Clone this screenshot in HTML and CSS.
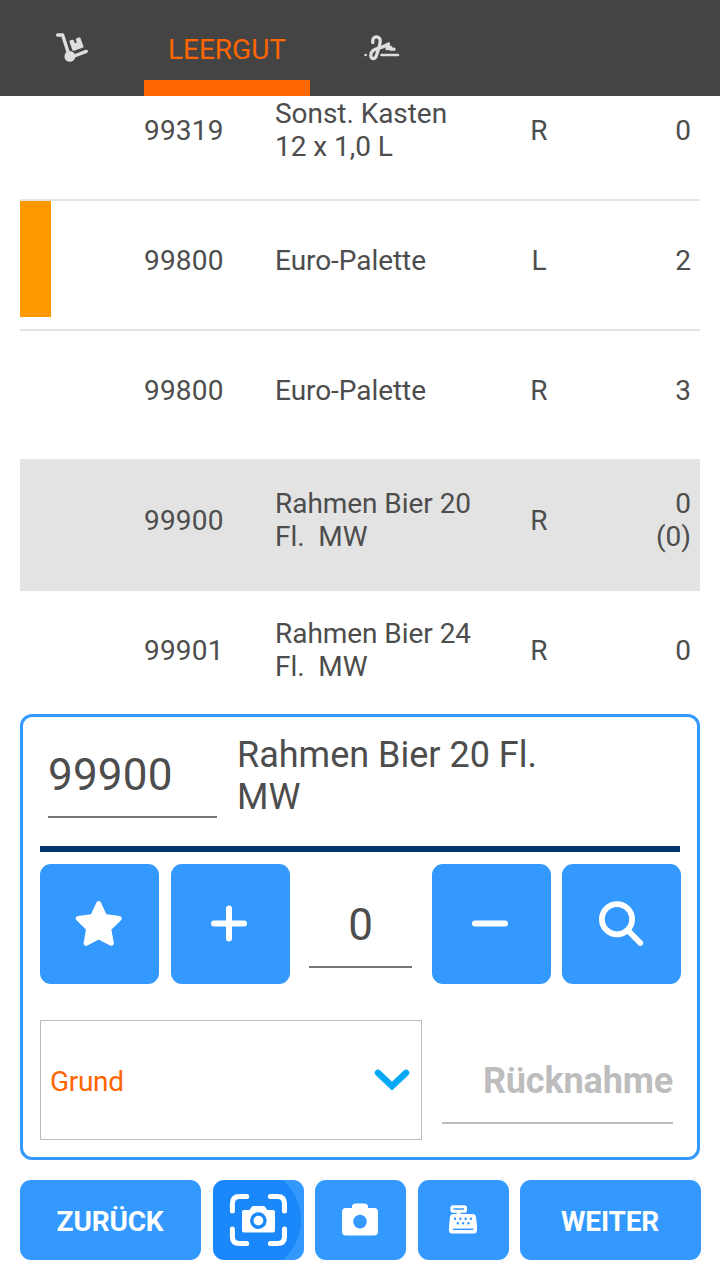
FILE: index.html
```html
<!DOCTYPE html>
<html lang="de">
  <head>
    <meta charset="UTF-8" />
    <meta name="viewport" content="width=device-width, initial-scale=1.0" />
    <title>Leergut</title>
    <link rel="stylesheet" href="styles.css">
  </head>
  <body>
    <div class="app">
      <nav class="tabs">
        <div class="tab">
          <svg width="36" height="34" viewBox="54 31 36 34" fill="none" stroke="#dedede" stroke-width="3.4" stroke-linecap="round" stroke-linejoin="round">
            <path d="M57.6 35H62.6L69 55M73 56.5L86.3 51.4" />
            <circle cx="69.8" cy="56.4" r="5.4" fill="#dedede" stroke="none" />
            <path d="M70.8 41.6L72.6 41L74.2 45L78.4 43.6L77.2 39.4L79.3 38.6L82.2 46.6L73.6 49.5Z" fill="#dedede" stroke-width="2.6" />
          </svg>
        </div>
        <div class="tab active">LEERGUT</div>
        <div class="tab">
          <svg width="38" height="30" viewBox="363 33 38 30" fill="none" stroke="#dedede" stroke-width="3.3" stroke-linecap="round" stroke-linejoin="round">
            <path d="M372.8 42.5V40.5C372.8 35.5 380.8 35.5 380.2 41.5C379.6 47 377.8 51 376.6 55C375.2 60 370.8 59.5 370.8 55C370.8 50 376 48.6 379.5 47.8C384 46.7 386 45 388.5 44L387 48.7L390.6 47.4V49.2H394" />
            <path d="M381.5 55H398M365.6 55h.1" stroke-width="2.6" />
          </svg>
        </div>
      </nav>

      <div class="list">
        <div class="row">
          <span class="marker"></span>
          <span class="number">99319</span>
          <span class="name">Sonst. Kasten<br>12 x 1,0 L</span>
          <span class="type">R</span>
          <span class="amount">0</span>
        </div>
        <div class="row">
          <span class="marker marked"></span>
          <span class="number">99800</span>
          <span class="name">Euro-Palette</span>
          <span class="type">L</span>
          <span class="amount">2</span>
        </div>
        <div class="row">
          <span class="marker"></span>
          <span class="number">99800</span>
          <span class="name">Euro-Palette</span>
          <span class="type">R</span>
          <span class="amount">3</span>
        </div>
        <div class="row selected">
          <span class="marker"></span>
          <span class="number">99900</span>
          <span class="name">Rahmen Bier 20<br>Fl.&nbsp; MW</span>
          <span class="type">R</span>
          <span class="amount">0<br>(0)</span>
        </div>
        <div class="row">
          <span class="marker"></span>
          <span class="number">99901</span>
          <span class="name">Rahmen Bier 24<br>Fl.&nbsp; MW</span>
          <span class="type">R</span>
          <span class="amount">0</span>
        </div>
      </div>

      <section class="panel">
        <div class="article">
          <div class="field article-number">99900</div>
          <div class="article-name">Rahmen Bier 20 Fl.<br>MW</div>
        </div>

        <div class="controls">
          <button class="btn" aria-label="Favorit">
            <svg width="48" height="48" viewBox="75 900 48 48" fill="#fff" stroke="#fff" stroke-width="5" stroke-linejoin="round">
              <path d="M98.7 903.6L104.5 916.4L119.2 918.5L108.7 928.8L111.3 943.3L98.7 936.8L86.1 943.3L88.7 928.8L78.3 918.5L92.9 916.4Z" />
            </svg>
          </button>
          <button class="btn" aria-label="Plus">
            <svg width="40" height="40" viewBox="209 904 40 40" fill="none" stroke="#fff" stroke-width="6" stroke-linecap="round">
              <path d="M214 923.6H244M229 908.6V938.6" />
            </svg>
          </button>
          <div class="field quantity">0</div>
          <button class="btn" aria-label="Minus">
            <svg width="40" height="40" viewBox="470 904 40 40" fill="none" stroke="#fff" stroke-width="6" stroke-linecap="round">
              <path d="M475 923.6H505" />
            </svg>
          </button>
          <button class="btn" aria-label="Suchen">
            <svg width="48" height="48" viewBox="597 900 48 48" fill="none" stroke="#fff" stroke-width="5.8" stroke-linecap="round">
              <circle cx="617" cy="919.2" r="15.1" />
              <path d="M628 930.5L640.3 943" />
            </svg>
          </button>
        </div>

        <div class="reason-row">
          <div class="select">
            <span>Grund</span>
            <svg width="36" height="24" viewBox="374 1068 36 24" fill="none" stroke="#03a9f4" stroke-width="6.4">
              <path d="M378 1071.8L392 1085L406 1071.8" stroke-linecap="round" />
            </svg>
          </div>
          <div class="field return">Rücknahme</div>
        </div>
      </section>

      <footer class="actions">
        <button class="btn">ZURÜCK</button>
        <button class="btn pressed" aria-label="Scannen">
          <svg width="58" height="54" viewBox="229 1193 58 54" fill="none">
            <path d="M232.4 1211V1203.5Q232.4 1196.5 239.4 1196.5H246.7M270.3 1196.5H277.5Q284.5 1196.5 284.5 1203.5V1211M284.5 1229V1236.5Q284.5 1243.5 277.5 1243.5H270.3M246.7 1243.5H239.4Q232.4 1243.5 232.4 1236.5V1229" stroke="#fff" stroke-width="5" stroke-linecap="round" />
            <path d="M244 1210H249.5L251.5 1207Q252.2 1206 253.5 1206H263.2Q264.5 1206 265.2 1207L267.2 1210H273Q275 1210 275 1212V1230.6Q275 1232.6 273 1232.6H244Q242 1232.6 242 1230.6V1212Q242 1210 244 1210Z" fill="#fff" />
            <circle cx="258.4" cy="1220.6" r="6.6" fill="#fff" stroke="#1a88fa" stroke-width="3.4" />
          </svg>
        </button>
        <button class="btn" aria-label="Foto">
          <svg width="36" height="34" viewBox="342 1203 36 34">
            <path d="M346 1208H352V1207Q352 1203.4 355.6 1203.4H364.3Q368 1203.4 368 1207V1208H374Q378 1208 378 1212V1231.4Q378 1235.4 374 1235.4H346Q342 1235.4 342 1231.4V1212Q342 1208 346 1208Z" fill="#fff" />
            <circle cx="360" cy="1221.6" r="6.8" fill="#39f" />
          </svg>
        </button>
        <button class="btn" aria-label="Kasse">
          <svg width="30" height="30" viewBox="448 1205 30 30" fill="none">
            <rect x="451.9" y="1206.7" width="13.6" height="4.6" rx="1" stroke="#fff" stroke-width="3" />
            <path d="M456.7 1211H460.5V1214H472.5Q475.5 1214 476 1217L477 1226V1230Q477 1233.6 474 1233.6H452Q449 1233.6 449 1230V1226L450 1217Q450.5 1214 453.5 1214H456.7Z" fill="#fff" />
            <path d="M453 1229.3H473.3" stroke="#39f" stroke-width="1.5" />
            <path d="M455 1218.7h.1M460.3 1218.7h.1M465.6 1218.7h.1M470.9 1218.7h.1M457.8 1223.2h.1M463.1 1223.2h.1M468.4 1223.2h.1" stroke="#39f" stroke-width="2.4" stroke-linecap="round" />
          </svg>
        </button>
        <button class="btn">WEITER</button>
      </footer>
    </div>
  </body>
</html>
```
FILE: styles.css
```css
* {
  box-sizing: border-box;
}

body {
  margin: 0;
  background-color: #fff;
  color: #4d4d4d;
  font-family: Roboto, sans-serif;
  font-size: 28px;
  line-height: 33px;
}

svg {
  display: block;
}

.app {
  display: flex;
  flex-direction: column;
  width: 720px;
  height: 1280px;
  overflow: hidden;
}

/* Tabs */
.tabs {
  display: flex;
  height: 96px;
  background-color: #444;
}

.tab {
  display: flex;
  align-items: center;
  justify-content: center;
  width: 144px;
}

.tab.active {
  width: 166px;
  padding-top: 18px;
  border-bottom: 16px solid #f60;
  color: #f60;
}

/* List */
.list {
  height: 608px;
  margin: 0 20px;
  overflow: hidden;
}

.row {
  display: grid;
  grid-template-columns: 31px 93px 131px 220px 88px 1fr;
  grid-template-areas: "marker . number name type amount";
  align-items: center;
  height: 130px;
  padding-bottom: 12px;
  border-bottom: 2px solid #e3e3e3;
}

/* the list is scrolled a little */
.row:first-child {
  margin-top: -25px;
}

.row.selected {
  background-color: #e3e3e3;
}

.marker {
  grid-area: marker;
  height: 116px;
}

.marker.marked {
  background-color: #f90;
}

.number,
.name,
.type,
.amount {
  padding-top: 2px;
}

.number {
  grid-area: number;
  letter-spacing: 0.2px;
}

.name {
  grid-area: name;
  letter-spacing: -0.05px;
}

.type {
  grid-area: type;
  text-align: center;
}

.amount {
  grid-area: amount;
  padding-right: 9px;
  text-align: right;
}

/* Article panel */
.panel {
  height: 446px;
  margin: 10px 20px 0;
  padding: 0 17px;
  border: 3px solid #39f;
  border-radius: 12px;
}

.field {
  border-bottom: 2px solid #757575;
  font-size: 44px;
  line-height: 52px;
}

.article {
  display: flex;
  height: 135px;
  padding-left: 8px;
  border-bottom: 6px solid #036;
}

.article-number {
  width: 169px;
  height: 101px;
  padding-top: 32px;
  letter-spacing: 0.2px;
}

.article-name {
  margin-left: 20px;
  padding-top: 17px;
  font-size: 36px;
  line-height: 42px;
}

.btn {
  display: flex;
  align-items: center;
  justify-content: center;
  padding: 0;
  border: none;
  border-radius: 11px;
  background-color: #39f;
  color: #fff;
  font-family: inherit;
  font-size: 28px;
  font-weight: bold;
  letter-spacing: -0.2px;
  line-height: 33px;
}

.controls {
  display: grid;
  grid-template-columns: repeat(5, 119px);
  justify-content: space-between;
  width: 641px;
  margin-top: 12px;
}

.controls .btn {
  height: 120px;
  padding-right: 2px;
}

.quantity {
  width: 103px;
  height: 104px;
  margin-left: 8px;
  padding-top: 35px;
  text-align: center;
}

.reason-row {
  display: flex;
  gap: 20px;
  margin-top: 36px;
}

.select {
  display: flex;
  align-items: center;
  justify-content: space-between;
  width: 382px;
  height: 120px;
  padding: 2px 11px 0 9px;
  border: 1px solid #bdbdbd;
  color: #f60;
  letter-spacing: -0.3px;
}

.return {
  width: 231px;
  height: 104px;
  padding-top: 40px;
  border-color: #bdbdbd;
  color: #bdbdbd;
  font-size: 36px;
  font-weight: bold;
  letter-spacing: -0.15px;
  line-height: 42px;
  text-align: right;
}

/* Bottom buttons */
.actions {
  display: grid;
  grid-template-columns: 181px 91px 91px 91px 181px;
  justify-content: space-between;
  width: 681px;
  height: 80px;
  margin: 20px 0 0 20px;
}

.actions .btn {
  padding-top: 2px;
  padding-right: 1px;
}

.actions .btn svg {
  margin-top: -2px;
}

.btn.pressed {
  background-image: radial-gradient(circle at 35px 40px, #1a88fa 52.5px, #39f 53.5px);
}
```
